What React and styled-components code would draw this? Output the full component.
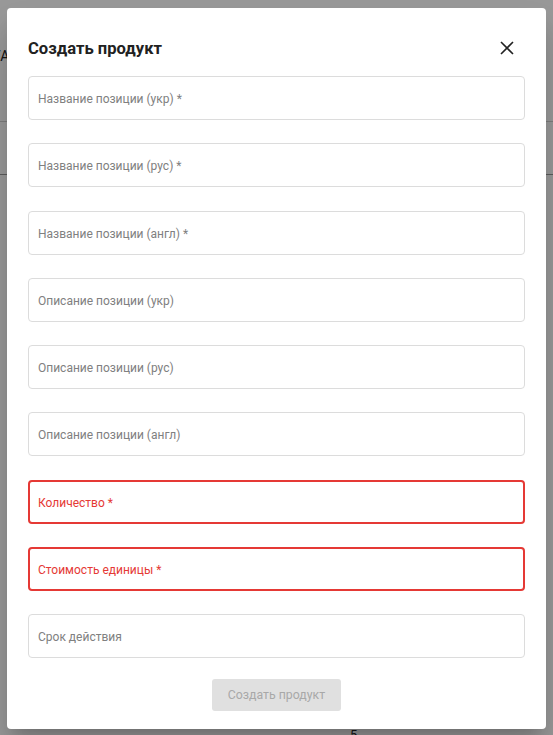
import React from 'react';
import styled, { createGlobalStyle } from 'styled-components';

const GlobalStyle = createGlobalStyle`
  html, body {
    margin: 0;
    padding: 0;
    height: 100%;
  }
  body {
    font-family: Roboto, "Noto Sans", Arial, sans-serif;
    background: #ffffff;
    overflow: hidden;
  }
`;

const Page = styled.div`
  position: relative;
  width: 553px;
  height: 735px;
  overflow: hidden;
  background: #ffffff;
`;

const BgHeader = styled.div`
  height: 122px;
  border-bottom: 1px solid #d0d0d0;
  display: flex;
  align-items: flex-start;
  padding-top: 48px;
  box-sizing: border-box;
  font-size: 14px;
  color: #222;
  margin-left: -8px;
`;

const BgRow = styled.div`
  height: 52px;
  border-bottom: 1px solid #9a9a9a;
`;

const BgPageNum = styled.div`
  position: absolute;
  left: 350px;
  top: 727px;
  font-size: 13px;
  color: #222;
`;

const Backdrop = styled.div`
  position: absolute;
  inset: 0;
  background: rgba(0, 0, 0, 0.4);
`;

const Modal = styled.div`
  position: absolute;
  left: 7px;
  top: 8px;
  width: 539px;
  height: 721px;
  box-sizing: border-box;
  background: #ffffff;
  border-radius: 4px;
  box-shadow: 0 11px 15px -7px rgba(0, 0, 0, 0.2), 0 24px 38px 3px rgba(0, 0, 0, 0.14);
  padding: 29px 21px 0 21px;
  display: flex;
  flex-direction: column;
`;

const Header = styled.div`
  display: flex;
  align-items: center;
  justify-content: space-between;
  height: 22px;
  margin-bottom: 17px;
`;

const Title = styled.h2`
  margin: 0;
  font-size: 16.6px;
  font-weight: 700;
  color: #212121;
`;

const CloseButton = styled.button`
  border: none;
  background: none;
  padding: 0;
  margin-right: 10px;
  width: 16px;
  height: 16px;
  display: flex;
  align-items: center;
  justify-content: center;
  cursor: pointer;
`;

const Form = styled.div`
  display: flex;
  flex-direction: column;
  gap: 23.25px;
`;

const Field = styled.div`
  height: 44px;
  box-sizing: border-box;
  border: ${({ $error }) => ($error ? '2px solid #e53935' : '1px solid #dcdcdc')};
  border-radius: 4px;
  display: flex;
  align-items: center;
  padding-left: ${({ $error }) => ($error ? '8px' : '9px')};
  padding-top: 2px;
  font-size: 12px;
  font-weight: 400;
  color: ${({ $error }) => ($error ? '#e53935' : '#808080')};
`;

const Footer = styled.div`
  display: flex;
  justify-content: center;
  margin-top: 21px;
`;

const SubmitButton = styled.button`
  width: 129px;
  height: 32px;
  border: none;
  border-radius: 3px;
  background: #e0e0e0;
  color: #a8a8a8;
  font-family: Roboto, "Noto Sans", Arial, sans-serif;
  font-size: 12.3px;
`;

const fields = [
  { label: 'Название позиции (укр) *' },
  { label: 'Название позиции (рус) *' },
  { label: 'Название позиции (англ) *' },
  { label: 'Описание позиции (укр)' },
  { label: 'Описание позиции (рус)' },
  { label: 'Описание позиции (англ)' },
  { label: 'Количество *', error: true },
  { label: 'Стоимость единицы *', error: true },
  { label: 'Срок действия' },
];

const App = () => {
  return (
    <Page>
      <GlobalStyle />
      <BgHeader>УА</BgHeader>
      <BgRow />
      <BgPageNum>5</BgPageNum>
      <Backdrop />
      <Modal>
        <Header>
          <Title>Создать продукт</Title>
          <CloseButton aria-label="close">
            <svg width="14" height="14" viewBox="0 0 14 14">
              <path d="M1 1L13 13M13 1L1 13" stroke="#222" strokeWidth="1.6" fill="none" />
            </svg>
          </CloseButton>
        </Header>
        <Form>
          {fields.map((f) => (
            <Field key={f.label} $error={f.error}>
              {f.label}
            </Field>
          ))}
        </Form>
        <Footer>
          <SubmitButton disabled>Создать продукт</SubmitButton>
        </Footer>
      </Modal>
    </Page>
  );
};

export default App;
